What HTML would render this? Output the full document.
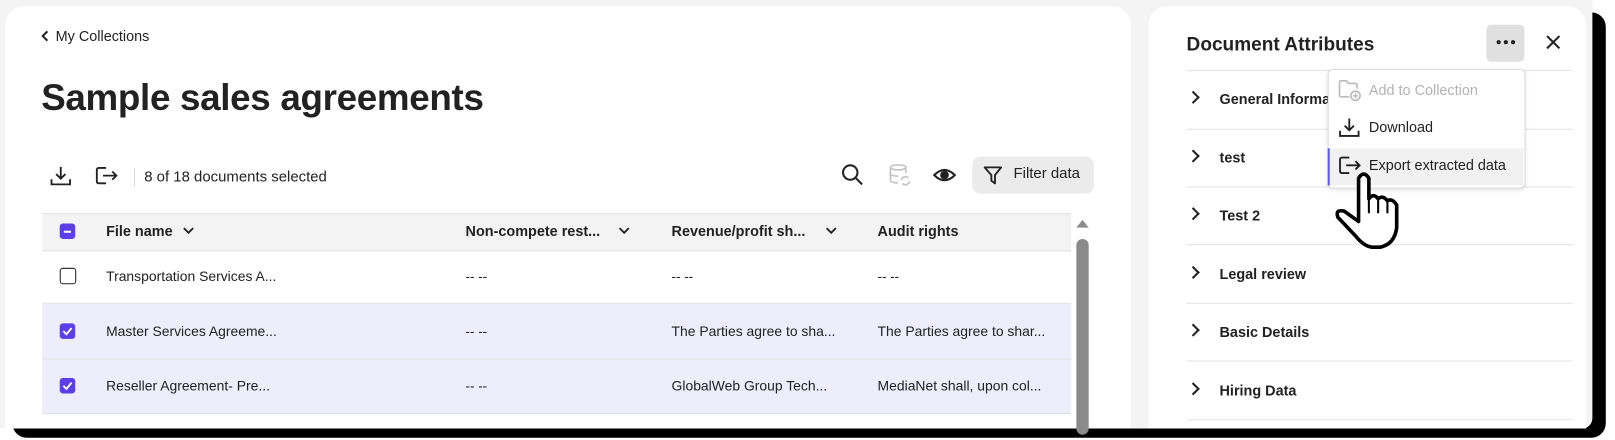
<!DOCTYPE html>
<html><head><style>
html,body{margin:0;padding:0;background:#fff;overflow:hidden;width:1615px;height:440px}
#s{position:absolute;left:0;top:0;width:1568px;height:427px;transform:scale(1.03);transform-origin:0 0;font-family:"Liberation Sans",sans-serif;color:#222}
.a{position:absolute}
.t{position:absolute;white-space:nowrap;font-size:14px}
.cb{position:absolute;width:15px;height:15px;border-radius:3px;background:#5b3ee6}
.hl{position:absolute;left:1152px;width:375px;height:1px;background:#e3e3e3}
.chev{position:absolute;left:1154px;width:7px;height:7px;border-right:2px solid #222;border-top:2px solid #222;transform:rotate(45deg)}
.rl{position:absolute;left:1184px;font-size:14px;font-weight:bold;color:#222}
</style></head><body><div id="s">
<div class="a" style="left:12px;top:12px;width:1547px;height:413px;background:#000;border-radius:14px"></div>
<div class="a" style="left:0;top:0;width:1546px;height:416px;background:#f4f4f4;border-radius:0 0 10px 0"></div>
<div class="a" style="left:5px;top:6px;width:1093px;height:410px;background:#fff;border-radius:18px 18px 0 0"></div>
<svg class="a" style="left:39px;top:29px" width="10" height="12"><path d="M7 1.5 L2.5 6 L7 10.5" stroke="#222" stroke-width="2" fill="none"/></svg>
<div class="t" style="left:54px;top:27px;font-size:14px">My Collections</div>
<div class="t" style="left:40px;top:75px;font-size:35.7px;font-weight:bold;letter-spacing:-0.3px">Sample sales agreements</div>
<svg class="a" style="left:48px;top:160px" width="22" height="22" fill="none" stroke="#222" stroke-width="1.8"><path d="M11 2 V13 M6.5 9 L11 13.5 L15.5 9 M2 14 V19 H20 V14"/></svg>
<svg class="a" style="left:92px;top:160px" width="24" height="22" fill="none" stroke="#222" stroke-width="1.8"><path d="M11 3 H4 Q2 3 2 5 V16 Q2 18 4 18 H11 M8 10.5 H21 M17 6.5 L21 10.5 L17 14.5"/></svg>
<div class="a" style="left:130px;top:163px;width:1px;height:18px;background:#ddd"></div>
<div class="t" style="left:140px;top:164px;font-size:14.5px">8 of 18 documents selected</div>
<svg class="a" style="left:816px;top:158px" width="24" height="24" fill="none" stroke="#222" stroke-width="2"><circle cx="9.5" cy="9.5" r="7"/><path d="M14.5 14.5 L21 21"/></svg>
<svg class="a" style="left:862px;top:158px" width="24" height="24" fill="none" stroke="#c4c4c4" stroke-width="1.6"><ellipse cx="10" cy="4.5" rx="7.5" ry="2.5"/><path d="M2.5 4.5 V17 Q2.5 19.5 10 19.5 M17.5 4.5 V10 M2.5 10.5 Q2.5 13 10 13"/><path d="M13 17 A4 4 0 0 1 20 15 M21 18 A4 4 0 0 1 14 20"/></svg>
<svg class="a" style="left:905px;top:160px" width="24" height="20" fill="none" stroke="#222" stroke-width="2"><path d="M2 10 Q12 0 22 10 Q12 20 2 10 Z"/><circle cx="12" cy="10" r="3.2" fill="#222"/></svg>
<div class="a" style="left:944px;top:152px;width:118px;height:36px;background:#ebebeb;border-radius:8px"></div>
<svg class="a" style="left:954px;top:160px" width="20" height="20" fill="none" stroke="#222" stroke-width="1.8"><path d="M2 2.5 H18 L12 10 V18 L8.5 15.5 V10 Z" stroke-linejoin="round"/></svg>
<div class="t" style="left:984px;top:161px;font-size:14.5px">Filter data</div>
<div class="a" style="left:41px;top:207px;width:999px;height:35px;background:#f3f3f3;border-top:1px solid #e2e2e2;border-bottom:1px solid #e2e2e2"></div>
<div class="a" style="left:41px;top:295px;width:999px;height:107px;background:#ededfc"></div>
<div class="a" style="left:41px;top:294px;width:999px;height:1px;background:#e3e3e3"></div>
<div class="a" style="left:41px;top:348px;width:999px;height:1px;background:#e3e3e3"></div>
<div class="a" style="left:41px;top:401px;width:999px;height:1px;background:#e3e3e3"></div>
<div class="cb" style="left:58px;top:217px"><div class="a" style="left:4px;top:6.5px;width:7px;height:2px;background:#fff"></div></div>
<div class="t" style="left:103px;top:216px;font-weight:bold">File name</div>
<svg class="a" style="left:177px;top:219px" width="12" height="10"><path d="M1.5 2.5 L6 7 L10.5 2.5" stroke="#222" stroke-width="1.8" fill="none"/></svg>
<div class="t" style="left:452px;top:216px;font-weight:bold">Non-compete rest...</div>
<svg class="a" style="left:600px;top:219px" width="12" height="10"><path d="M1.5 2.5 L6 7 L10.5 2.5" stroke="#222" stroke-width="1.8" fill="none"/></svg>
<div class="t" style="left:652px;top:216px;font-weight:bold">Revenue/profit sh...</div>
<svg class="a" style="left:801px;top:219px" width="12" height="10"><path d="M1.5 2.5 L6 7 L10.5 2.5" stroke="#222" stroke-width="1.8" fill="none"/></svg>
<div class="t" style="left:852px;top:216px;font-weight:bold">Audit rights</div>
<div class="a" style="left:58px;top:260px;width:14px;height:14px;border:1.8px solid #222;border-radius:3px"></div>
<div class="t" style="left:103px;top:261px;font-size:13.5px">Transportation Services A...</div>
<div class="t" style="left:452px;top:261px;font-size:13px">-- --</div>
<div class="t" style="left:652px;top:261px;font-size:13px">-- --</div>
<div class="t" style="left:852px;top:261px;font-size:13px">-- --</div>
<div class="cb" style="left:58px;top:314px"><svg width="15" height="15"><path d="M3.5 7.5 L6.5 10.5 L11.5 4.5" stroke="#fff" stroke-width="1.8" fill="none"/></svg></div>
<div class="t" style="left:103px;top:314px;font-size:13.5px">Master Services Agreeme...</div>
<div class="t" style="left:452px;top:314px;font-size:13px">-- --</div>
<div class="t" style="left:652px;top:314px;font-size:13.5px">The Parties agree to sha...</div>
<div class="t" style="left:852px;top:314px;font-size:13.5px">The Parties agree to shar...</div>
<div class="cb" style="left:58px;top:367px"><svg width="15" height="15"><path d="M3.5 7.5 L6.5 10.5 L11.5 4.5" stroke="#fff" stroke-width="1.8" fill="none"/></svg></div>
<div class="t" style="left:103px;top:367px;font-size:13.5px">Reseller Agreement- Pre...</div>
<div class="t" style="left:452px;top:367px;font-size:13px">-- --</div>
<div class="t" style="left:652px;top:367px;font-size:13.5px">GlobalWeb Group Tech...</div>
<div class="t" style="left:852px;top:367px;font-size:13.5px">MediaNet shall, upon col...</div>
<svg class="a" style="left:1044px;top:212px" width="14" height="10"><path d="M1 9 L7 1.5 L13 9 Z" fill="#8a8a8a"/></svg>
<div class="a" style="left:1045px;top:232px;width:12px;height:190px;background:#8a8a8a;border-radius:6px"></div>
<div class="a" style="left:1115px;top:6px;width:425px;height:410px;background:#fff;border-radius:18px 18px 0 0"></div>
<div class="t" style="left:1152px;top:32px;font-size:18.5px;font-weight:bold">Document Attributes</div>
<div class="a" style="left:1443px;top:24px;width:37px;height:36px;background:#e0e0e0;border-radius:5px"></div>
<svg class="a" style="left:1451px;top:38px" width="22" height="6"><circle cx="4" cy="3" r="2" fill="#222"/><circle cx="11" cy="3" r="2" fill="#222"/><circle cx="18" cy="3" r="2" fill="#222"/></svg>
<svg class="a" style="left:1500px;top:33px" width="16" height="16"><path d="M2 2 L14 14 M14 2 L2 14" stroke="#222" stroke-width="2"/></svg>
<div class="hl" style="top:68px"></div><div class="hl" style="top:125px"></div><div class="hl" style="top:181px"></div><div class="hl" style="top:237px"></div><div class="hl" style="top:294px"></div><div class="hl" style="top:350px"></div><div class="hl" style="top:407px"></div>
<div class="chev" style="top:90px"></div><div class="rl" style="top:88px">General Information</div>
<div class="chev" style="top:147px"></div><div class="rl" style="top:145px">test</div>
<div class="chev" style="top:203px"></div><div class="rl" style="top:201px">Test 2</div>
<div class="chev" style="top:260px"></div><div class="rl" style="top:258px">Legal review</div>
<div class="chev" style="top:316px"></div><div class="rl" style="top:314px">Basic Details</div>
<div class="chev" style="top:373px"></div><div class="rl" style="top:371px">Hiring Data</div>
<div class="a" style="left:1289px;top:67px;width:190px;height:114px;background:#fff;border:1px solid #dcdcdc;border-radius:5px;box-shadow:0 1px 4px rgba(0,0,0,.12)"></div>
<div class="a" style="left:1290px;top:144px;width:189px;height:36px;background:#f1f1f1"></div>
<div class="a" style="left:1289px;top:144px;width:2px;height:36px;background:#5b5bf0"></div>
<svg class="a" style="left:1299px;top:77px" width="24" height="22" fill="none" stroke="#bbb" stroke-width="1.6"><path d="M11 17 H3 Q1.5 17 1.5 15.5 V3 Q1.5 1.5 3 1.5 H8 L10 4 H17 Q18.5 4 18.5 5.5 V9"/><circle cx="17" cy="16" r="4.5"/><path d="M17 13.5 V18.5 M14.5 16 H19.5" stroke-width="1.4"/></svg>
<div class="t" style="left:1329px;top:79px;color:#b3b3b3">Add to Collection</div>
<svg class="a" style="left:1299px;top:113px" width="22" height="22" fill="none" stroke="#222" stroke-width="1.8"><path d="M11 2 V13 M6.5 9 L11 13.5 L15.5 9 M2 14 V19 H20 V14"/></svg>
<div class="t" style="left:1329px;top:115px">Download</div>
<svg class="a" style="left:1299px;top:150px" width="24" height="22" fill="none" stroke="#222" stroke-width="1.8"><path d="M11 3 H4 Q2 3 2 5 V16 Q2 18 4 18 H11 M8 10.5 H21 M17 6.5 L21 10.5 L17 14.5"/></svg>
<div class="t" style="left:1329px;top:152px">Export extracted data</div>
<svg class="a" style="left:1294px;top:163px" width="70" height="82"><path d="M25 46 L25 10 Q30 2 35 10 L35 30 Q39.5 24 44 30 Q48.5 26 53 32 Q57.5 29 62 36 L62 58 Q60 74 46 77 L38 77 Q30 76 22 66 L5 48 Q2 40 11 42 L25 52 Z" fill="#fff" stroke="#000" stroke-width="3.5" stroke-linejoin="round"/><path d="M35 30 V44 M44 30 V44 M53 32 V44" stroke="#000" stroke-width="2"/></svg>
</div></body></html>
